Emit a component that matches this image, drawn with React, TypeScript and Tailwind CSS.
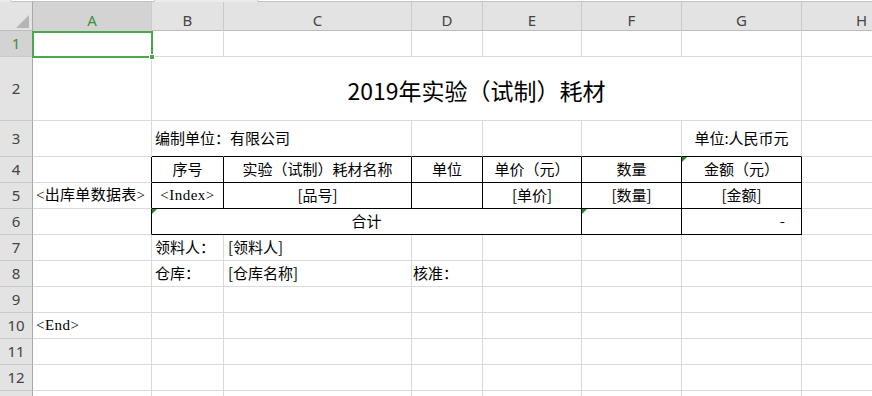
import React from 'react';

const cols = ['A', 'B', 'C', 'D', 'E', 'F', 'G', 'H'];
const rowNums = [1, 2, 3, 4, 5, 6, 7, 8, 9, 10, 11, 12, 13];

const grid = 'border-r border-b border-[#dadada]';
const tri = (
  <span className="absolute left-0 top-0 w-0 h-0 border-t-[5px] border-t-[#1f8a1f] border-r-[5px] border-r-transparent" />
);

function C({
  children,
  className = '',
}: {
  children?: React.ReactNode;
  className?: string;
}) {
  return (
    <div className={`relative flex items-center whitespace-nowrap ${grid} ${className}`}>
      {children}
    </div>
  );
}

function RowHead({ n }: { n: number }) {
  const active = n === 1;
  return (
    <div
      className={`flex items-center justify-center border-r border-r-[#a9a9a9] border-b border-b-[#c9c9c9] text-[15px] ${
        active ? 'bg-[#d3d3d3] text-[#3d8f3d]' : 'bg-[#e3e3e3] text-[#444]'
      }`}
      style={{ fontFamily: '"Noto Sans", sans-serif' }}
    >
      {/* row 13 only peeks in at the bottom edge, its number is out of view */}
      {n < 13 ? n : null}
    </div>
  );
}

export default function App() {
  const tb = 'border-b-black';
  const tr = 'border-r-black';
  const serif = { fontFamily: '"Liberation Serif", "Noto Sans CJK SC", serif' };

  return (
    <div
      className="w-[872px] h-[396px] overflow-hidden bg-white text-black text-[15px]"
      style={{ fontFamily: '"Noto Sans CJK SC", sans-serif' }}
    >
      {/* formula bar edge */}
      <div className="h-[2px] bg-[#ececec] flex">
        <div className="ml-[10px] w-[145px] h-[2px] bg-white border-b border-x border-[#c4c4c4] rounded-b-[2px]" />
        <div className="ml-[102px] flex-1 h-[2px] bg-white border-b border-l border-[#c4c4c4] rounded-bl-[2px]" />
      </div>

      {/* column headers */}
      <div
        className="grid grid-cols-[33px_119px_72px_188px_71px_99px_100px_120px_120px_100px] h-[29px] bg-[#e3e3e3] border-b border-[#bdbdbd] text-[15px]"
        style={{ fontFamily: '"Noto Sans", sans-serif' }}
      >
        <div className="relative border-r border-[#a9a9a9]">
          <svg className="absolute left-[16px] top-[13px]" width="13" height="13" viewBox="0 0 13 13">
            <polygon points="13,0 13,13 0,13" fill="#b5b5b5" />
          </svg>
        </div>
        {cols.map((c) => (
          <div
            key={c}
            className={`flex items-center justify-center pt-[7px] border-r border-[#cbcbcb] ${
              c === 'A' ? 'bg-[#d3d3d3] text-[#3d8f3d]' : 'text-[#444]'
            }`}
          >
            {c}
          </div>
        ))}
        <div />
      </div>

      {/* sheet body */}
      <div className="grid grid-cols-[33px_119px_72px_188px_71px_99px_100px_120px_120px_100px] grid-rows-[26px_64px_36px_26px_26px_26px_26px_26px_26px_26px_26px_26px_26px]">
        {/* row 1 */}
        <RowHead n={1} />
        <C>
          <div className="absolute left-[-1px] top-[0px] w-[121px] h-[27px] border-2 border-[#4ca64c] z-10" />
          <div className="absolute left-[116px] top-[23px] w-[6px] h-[6px] bg-[#4ca64c] border border-white z-20" />
        </C>
        <C /><C /><C /><C /><C /><C /><C />
        <div className={grid} />

        {/* row 2 */}
        <RowHead n={2} />
        <C />
        <C className="col-span-6 justify-center text-[23px] pt-[4px]">2019年实验（试制）耗材</C>
        <C /><div className={grid} />

        {/* row 3 */}
        <RowHead n={3} />
        <C />
        <C className={`${tb} border-r-transparent pl-[3px]`}>
          <span className="relative z-10">编制单位：有限公司</span>
        </C>
        <C className={tb} />
        <C className={tb} />
        <C className={tb} />
        <C className={tb} />
        <C className={`${tb} justify-center`}>单位:人民币元</C>
        <C /><div className={grid} />

        {/* row 4 */}
        <RowHead n={4} />
        <C className={tr} />
        <C className={`${tr} ${tb} justify-center`}>序号</C>
        <C className={`${tr} ${tb} justify-center`}>实验（试制）耗材名称</C>
        <C className={`${tr} ${tb} justify-center`}>单位</C>
        <C className={`${tr} ${tb} justify-center`}>单价（元）</C>
        <C className={`${tr} ${tb} justify-center`}>数量</C>
        <C className={`${tr} ${tb} justify-center`}>
          {tri}
          金额（元）
        </C>
        <C /><div className={grid} />

        {/* row 5 */}
        <RowHead n={5} />
        <C className={`${tr} pl-[3px]`}>
          <span style={serif} className="tracking-[0.3px]">&lt;出库单数据表&gt;</span>
        </C>
        <C className={`${tr} ${tb} justify-center`}>
          <span style={serif} className="tracking-[0.5px]">&lt;Index&gt;</span>
        </C>
        <C className={`${tr} ${tb} justify-center`}>[品号]</C>
        <C className={`${tr} ${tb}`} />
        <C className={`${tr} ${tb} justify-center`}>[单价]</C>
        <C className={`${tr} ${tb} justify-center`}>[数量]</C>
        <C className={`${tr} ${tb} justify-center`}>[金额]</C>
        <C /><div className={grid} />

        {/* row 6 */}
        <RowHead n={6} />
        <C className={tr} />
        <C className={`${tr} ${tb} col-span-4 justify-center`}>
          {tri}
          合计
        </C>
        <C className={`${tr} ${tb}`}>{tri}</C>
        <C className={`${tr} ${tb} justify-end pr-[16px]`}>-</C>
        <C /><div className={grid} />

        {/* row 7 */}
        <RowHead n={7} />
        <C />
        <C className="pl-[3px]">领料人：</C>
        <C className="pl-[4px]">[领料人]</C>
        <C /><C /><C /><C /><C />
        <div className={grid} />

        {/* row 8 */}
        <RowHead n={8} />
        <C />
        <C className="pl-[3px]">仓库：</C>
        <C className="pl-[4px]">[仓库名称]</C>
        <C className="pl-[1px]">核准：</C>
        <C /><C /><C /><C />
        <div className={grid} />

        {/* rows 9 - 13 */}
        {rowNums.slice(8).map((n) => (
          <React.Fragment key={n}>
            <RowHead n={n} />
            <C className="pl-[3px]">
              {n === 10 && <span style={serif} className="tracking-[0.5px]">&lt;End&gt;</span>}
            </C>
            <C /><C /><C /><C /><C /><C /><C />
            <div className={grid} />
          </React.Fragment>
        ))}
      </div>
    </div>
  );
}
